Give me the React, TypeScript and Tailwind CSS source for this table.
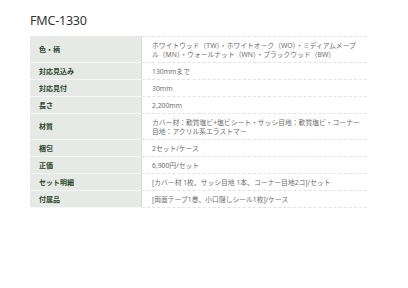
import React from "react";

const rows: { label: string; value: React.ReactNode }[] = [
  {
    label: "色・柄",
    value: (
      <>
        ホワイトウッド（TW）・ホワイトオーク（WO）・ミディアムメープ
        <br />
        ル（MN）・ウォールナット（WN）・ブラックウッド（BW）
      </>
    ),
  },
  { label: "対応見込み", value: "130mmまで" },
  { label: "対応見付", value: "30mm" },
  { label: "長さ", value: "2,200mm" },
  {
    label: "材質",
    value: (
      <>
        カバー材：軟質塩ビ+塩ビシート・サッシ目地：軟質塩ビ・コーナー
        <br />
        目地：アクリル系エラストマー
      </>
    ),
  },
  { label: "梱包", value: "2セット/ケース" },
  { label: "正価", value: "6,900円/セット" },
  { label: "セット明細", value: "[カバー材 1枚、サッシ目地 1本、コーナー目地2コ]/セット" },
  { label: "付属品", value: "[両面テープ1巻、小口隠しシール1枚]/ケース" },
];

export default function App() {
  return (
    <div
      className="w-[408px] h-[288px] bg-white"
      style={{ fontFamily: '"Noto Sans", "Noto Sans CJK JP", sans-serif' }}
    >
      <div className="pl-[30px] pt-[13px]">
        <div className="text-[12.5px] leading-[16px] text-[#333] tracking-[-0.2px]">FMC-1330</div>
        <div className="mt-[7px] w-[337px] flex flex-col">
          <div className="flex">
            <div className="w-[112px] shrink-0 bg-[#e6e9e6] h-px" />
            <div className="flex-1 border-t border-dashed border-[#e3e3e3]" />
          </div>
          {rows.map((r, i) => (
            <div key={i} className="flex">
              <div className="w-[112px] shrink-0 bg-[#e6e9e6] border-b border-b-[#f4f5f4] border-r border-r-[#dadeda] flex items-center pl-[9px] text-[7px] leading-[9px] font-bold text-[#2a472a]">
                {r.label}
              </div>
              <div className="flex-1 border-b border-dashed border-[#e3e3e3] pl-[10px] pt-[4px] pb-[3px] text-[6.8px] leading-[9px] text-[#6e6e6e] whitespace-nowrap">
                {r.value}
              </div>
            </div>
          ))}
        </div>
      </div>
    </div>
  );
}
